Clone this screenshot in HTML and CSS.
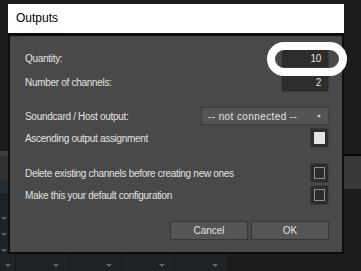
FILE: index.html
```html
<!DOCTYPE html>
<html lang="en">
<head>
    <meta charset="UTF-8">
    <meta name="viewport" content="width=device-width, initial-scale=1.0">
    <title>Outputs</title>
    <link rel="stylesheet" href="styles.css">
</head>
<body>

    <!-- Background application -->
    <div class="app">
        <div class="app-main">
            <div class="side-left">
                <div class="dark-fill"></div>
                <div class="strip-light"></div>
                <div class="strip-mid"></div>
                <div class="strip-blue"></div>
                <div class="tri-rows">
                    <span class="tri"></span>
                    <span class="tri"></span>
                    <span class="tri"></span>
                </div>
            </div>
            <div class="app-center"></div>
            <div class="side-right">
                <div class="dark-fill-r"></div>
                <div class="strip-black"></div>
                <div class="strip-gray"></div>
            </div>
        </div>
        <div class="app-bottom">
            <div class="cell first"><span class="tri"></span></div>
            <div class="cell"><span class="tri"></span></div>
            <div class="cell"><span class="tri"></span></div>
            <div class="cell"><span class="tri"></span></div>
            <div class="cell"><span class="tri"></span></div>
        </div>
    </div>

    <!-- Outputs dialog -->
    <div class="dialog">
        <div class="dialog-title">Outputs</div>
        <div class="dialog-body">
            <div class="group">
                <div class="row">
                    <span class="label">Quantity:</span>
                    <div class="field">10</div>
                </div>
                <div class="row">
                    <span class="label">Number of channels:</span>
                    <div class="field">2</div>
                </div>
            </div>

            <div class="group tight">
                <div class="row short">
                    <span class="label">Soundcard / Host output:</span>
                    <div class="select">
                        <span>-- not connected --</span>
                        <span class="select-arrow"></span>
                    </div>
                </div>
                <div class="row check">
                    <span class="label">Ascending output assignment</span>
                    <div class="checkbox checked"><span class="mark"></span></div>
                </div>
            </div>

            <div class="group pair">
                <div class="row check">
                    <span class="label">Delete existing channels before creating new ones</span>
                    <div class="checkbox"><span class="mark"></span></div>
                </div>
                <div class="row check">
                    <span class="label">Make this your default configuration</span>
                    <div class="checkbox"><span class="mark"></span></div>
                </div>
            </div>

            <div class="actions">
                <button class="button">Cancel</button>
                <button class="button">OK</button>
            </div>
        </div>
    </div>

    <!-- Highlight ring around the quantity field -->
    <div class="highlight"></div>

</body>
</html>
```

FILE: styles.css
```css
body {
    margin: 0;
    padding: 0;
    width: 361px;
    height: 271px;
    overflow: hidden;
    position: relative;
    background-color: #1c1c1c;
    font-family: 'Liberation Sans', Arial, sans-serif;
}
/* Background app */
.app {
    display: flex;
    flex-direction: column;
    height: 271px;
}
.app-main {
    display: flex;
    height: 254px;
}
.side-left {
    width: 8px;
    display: flex;
    flex-direction: column;
}
.dark-fill {
    height: 151px;
}
.strip-light {
    height: 5px;
    background-color: #3d3d3d;
}
.strip-mid {
    height: 24px;
    background-color: #323232;
}
.strip-blue {
    height: 13px;
    background-color: #252d33;
}
.tri-rows {
    flex: 1;
    display: flex;
    flex-direction: column;
    align-items: center;
    gap: 13px;
    padding-top: 24px;
    background-color: #1f2225;
}
.tri {
    width: 0;
    height: 0;
    border-left: 3px solid transparent;
    border-right: 3px solid transparent;
    border-top: 3px solid #5f6468;
}
.app-center {
    flex: 1;
}
.side-right {
    width: 17px;
    display: flex;
    flex-direction: column;
}
.dark-fill-r {
    height: 154px;
}
.strip-black {
    height: 2px;
    background-color: #050505;
}
.strip-gray {
    height: 33px;
    background-color: #393939;
}
.app-bottom {
    height: 17px;
    display: flex;
}
.cell {
    width: 53px;
    box-sizing: border-box;
    border-left: 1px solid #151719;
    background-color: #202326;
    display: flex;
    justify-content: flex-end;
    align-items: flex-end;
    padding: 0 9px 4px 0;
}
.cell.first {
    width: 15px;
    border-left: none;
    justify-content: center;
    padding: 0 0 4px 0;
}
/* Dialog */
.dialog {
    position: absolute;
    left: 8px;
    top: 4px;
    width: 336px;
}
.dialog-title {
    height: 29px;
    line-height: 29px;
    background-color: #fff;
    color: #000;
    font-size: 12px;
    padding-left: 8px;
}
.dialog-body {
    background-color: #494949;
    border: 2px solid #0d0d0d;
    border-top-width: 3px;
    padding: 13px 13px 12px 15px;
    font-size: 10px;
    letter-spacing: -0.3px;
    color: #e2e2e2;
}
.group {
    display: flex;
    flex-direction: column;
    gap: 5px;
}
.group.tight {
    gap: 3px;
    margin-top: 15px;
}
.group.pair {
    gap: 2px;
    margin-top: 15px;
}
.row {
    display: flex;
    justify-content: space-between;
    align-items: center;
    height: 19px;
}
.row.short {
    height: 18px;
}
.row.check {
    height: 20px;
}
.field {
    width: 48px;
    height: 19px;
    box-sizing: border-box;
    background-color: #2d2d2d;
    border: 1px solid #3b3b3b;
    text-align: right;
    padding-right: 7px;
    line-height: 17px;
}
.select {
    width: 128px;
    height: 18px;
    box-sizing: border-box;
    background-color: #545454;
    border: 1px solid #3c3c3c;
    display: flex;
    justify-content: space-between;
    align-items: center;
    padding: 0 7px 0 6px;
    letter-spacing: 0.4px;
}
.select-arrow {
    width: 0;
    height: 0;
    border-left: 2.5px solid transparent;
    border-right: 2.5px solid transparent;
    border-top: 3px solid #d0d0d0;
    margin-top: 1px;
}
.checkbox {
    width: 19px;
    height: 20px;
    box-sizing: border-box;
    background-color: #2c2c2c;
    border: 1px solid #3c3c3c;
    display: flex;
    justify-content: center;
    align-items: center;
}
.mark {
    width: 11px;
    height: 12px;
    box-sizing: border-box;
    border: 1px solid #8e8e8e;
}
.checkbox.checked .mark {
    background-color: #e2e2e2;
    border-color: #e2e2e2;
}
.actions {
    display: flex;
    justify-content: flex-end;
    gap: 3px;
    margin-top: 16px;
}
.button {
    width: 78px;
    height: 19px;
    box-sizing: border-box;
    background-color: #555;
    border: 1px solid #363636;
    color: #e2e2e2;
    font-family: 'Liberation Sans', Arial, sans-serif;
    font-size: 10px;
    padding: 0;
}
.highlight {
    position: absolute;
    left: 267px;
    top: 42px;
    width: 80px;
    height: 34px;
    box-sizing: border-box;
    border: 8px solid #fff;
    border-radius: 17px;
}
```
